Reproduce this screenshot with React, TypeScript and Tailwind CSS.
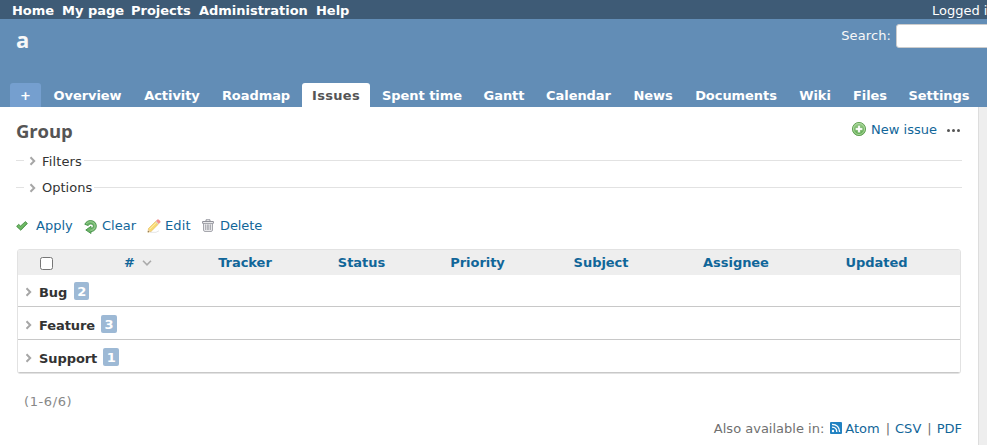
import React from "react";

const topLinks = [
  { name: "Home", width: "w-[50px]" },
  { name: "My page", width: "w-[69px]" },
  { name: "Projects", width: "w-[68px]" },
  { name: "Administration", width: "w-[117px]" },
  { name: "Help", width: "w-[40px]" },
];
const tabs = [
  { name: "Overview", width: "w-[89px]" },
  { name: "Activity", width: "w-[76px]" },
  { name: "Roadmap", width: "w-[88px]" },
  { name: "Issues", width: "w-[68px]" },
  { name: "Spent time", width: "w-[100px]" },
  { name: "Gantt", width: "w-[60px]" },
  { name: "Calendar", width: "w-[85px]" },
  { name: "News", width: "w-[60px]" },
  { name: "Documents", width: "w-[102px]" },
  { name: "Wiki", width: "w-[52px]" },
  { name: "Files", width: "w-[54px]" },
  { name: "Settings", width: "w-[80px]" },
];
const columns = [
  { name: "Tracker", width: "w-[116px]" },
  { name: "Status", width: "w-[117px]" },
  { name: "Priority", width: "w-[115px]" },
  { name: "Subject", width: "w-[132px]" },
  { name: "Assignee", width: "w-[138px]" },
  { name: "Updated", width: "w-[143px]" },
];
const groups = [
  { name: "Bug", count: 2 },
  { name: "Feature", count: 3 },
  { name: "Support", count: 1 },
];

function Chevron({ className = "" }: { className?: string }) {
  return (
    <svg className={className} width="8" height="10" viewBox="0 0 8 10" fill="none" stroke="#a6a6a6" strokeWidth="2">
      <path d="M1.5 1.2 5.2 5 1.5 8.8" />
    </svg>
  );
}

function AddIcon() {
  return (
    <svg width="16" height="16" viewBox="0 0 16 16" className="shrink-0">
      <defs>
        <linearGradient id="add" x1="0" y1="0" x2="0" y2="1">
          <stop offset="0" stopColor="#9bcf8b" />
          <stop offset="1" stopColor="#58a848" />
        </linearGradient>
      </defs>
      <circle cx="8" cy="8" r="6.6" fill="url(#add)" stroke="#5c9d4e" strokeWidth=".9" />
      <circle cx="8" cy="8" r="5.5" fill="none" stroke="#b5dba9" strokeWidth=".9" />
      <path d="M6.7 4.3h2.6v2.4h2.4v2.6H9.3v2.4H6.7V9.3H4.3V6.7h2.4z" fill="#fff" stroke="#68a95a" strokeWidth=".5" />
    </svg>
  );
}

function ApplyIcon() {
  return (
    <svg width="12" height="10" viewBox="0 0 12 10" className="shrink-0">
      <path d="M.6 5.4 2.6 3.3 4.6 5 9.4.6l2 1.9-6.6 6.8z" fill="#62b05a" stroke="#468d43" strokeWidth=".8" strokeLinejoin="round" />
      <path d="M2.2 4.8 4.6 6.8 9.7 1.9" fill="none" stroke="#83c779" strokeWidth=".8" />
    </svg>
  );
}

function ClearIcon() {
  return (
    <svg width="13" height="14" viewBox="0 0 13 14" className="shrink-0">
      <path d="M.8 4.3C2 1.6 4.4.5 6.8.6c3.3.1 5.5 2.4 5.5 5.5 0 3-2.1 5.3-5.3 5.5v1.9L1.8 10 7 6.3v2c1.5-.1 2.3-.9 2.3-2.1 0-1.3-1-2.2-2.5-2.2-1.2 0-2 .6-2.6 1.5z" fill="#6db568" stroke="#45914a" strokeWidth=".9" strokeLinejoin="round" />
      <path d="M2.3 4C3.6 2.2 5.1 1.7 6.8 1.8c2.6.1 4.3 1.9 4.3 4.3 0 2.3-1.7 4.1-4.6 4.3" fill="none" stroke="#a3d49d" strokeWidth=".9" />
    </svg>
  );
}

function EditIcon() {
  return (
    <svg width="14" height="14" viewBox="0 0 14 14" className="shrink-0">
      <path d="M3 13.3h6l3-1.5" stroke="#e5e5e5" fill="none" />
      <path d="M1.5 9.6 8.8 2.3l2.7 2.7-7.3 7.3-3.2.9z" fill="#f9da72" stroke="#e3b44e" strokeWidth=".6" />
      <path d="m2.7 10.1 7-7" stroke="#fff0b5" />
      <path d="m9 2.2 1.3-1.3q.7-.6 1.4 0l1.2 1.2q.6.7 0 1.4l-1.3 1.3z" fill="#f5918d" stroke="#eb7b78" strokeWidth=".5" />
      <path d="m8.4 2.8.7-.7 2.6 2.6-.7.7z" fill="#dedbd1" />
      <path d="m1.3 10.3-.5 3 3.1-.8z" fill="#edd0a5" />
      <path d="m.7 13.3.3-1.6 1.3 1.3z" fill="#6e6048" />
    </svg>
  );
}

function TrashIcon() {
  return (
    <svg width="12" height="13" viewBox="0 0 12 13" className="shrink-0" fill="none" stroke="#85868f" strokeWidth=".9">
      <path d="M4 2.2V.8h4v1.4M.6 2.5h10.8v1.8H.6zM1.7 4.7v6.6q0 1 .9 1h6.8q.9 0 .9-1V4.7" />
      <path d="M3.7 5.3v5.7M5.25 5.3v5.7M6.8 5.3v5.7M8.35 5.3v5.7" strokeWidth=".8" />
    </svg>
  );
}

function FeedIcon() {
  return (
    <svg width="12" height="12" viewBox="0 0 12 12" className="shrink-0">
      <rect width="12" height="12" rx="1" fill="#2182c2" />
      <path d="M2 2.4q7.4.2 7.6 7.6M2 5.2q4.7.1 4.8 4.8" fill="none" stroke="#fff" strokeWidth="1.3" />
      <circle cx="3" cy="9" r="1.2" fill="#fff" />
    </svg>
  );
}

function Fieldset({ label, className, labelClass }: { label: string; className: string; labelClass: string }) {
  return (
    <div className={`flex h-[17px] items-center ${className}`}>
      <span className="h-px w-2 bg-[#e2e2e2]" />
      <Chevron className="ml-[5px]" />
      <span className={`ml-[5px] text-[#333] ${labelClass}`}>{label}</span>
      <span className="h-px flex-1 bg-[#e2e2e2]" />
    </div>
  );
}

export default function App() {
  return (
    <div className="flex h-[445px] w-[987px] flex-col overflow-hidden bg-[#eee] text-[13px] leading-[17px] whitespace-nowrap text-[#333] [font-family:Verdana,'DejaVu_Sans',sans-serif]">
      <nav className="flex h-[19px] shrink-0 overflow-hidden bg-[#3e5b76] pt-[2px] pl-3 font-bold text-white">
        <div className="flex tracking-[-0.02px]">
          {topLinks.map((link) => <a key={link.name} className={link.width}>{link.name}</a>)}
        </div>
        <span className="-mr-20 ml-auto w-[135px] font-normal">Logged in as</span>
      </nav>

      <header className="flex h-[88px] shrink-0 flex-col justify-between bg-[#628db6] text-white">
        <div className="flex justify-between">
          <h1 className="pt-[8px] pl-4 text-[22px] leading-6 font-bold text-[#f8f8f8] [font-family:'Trebuchet_MS','Open_Sans',sans-serif]">a</h1>
          <div className="flex pt-[5px]">
            <label className="pt-[3px] tracking-[0.1px] text-[#f8f8f8]">Search:</label>
            <div className="-mr-2 ml-[5px] h-6 w-[99px] rounded-[3px] border border-[#ccc] bg-white" />
          </div>
        </div>
        <div className="flex h-6 gap-[2px] pl-[10px] font-bold tracking-[-0.06px]">
          <span className="w-[31px] shrink-0 rounded-t-[3px] bg-[#759fcf] pt-1 text-center">+</span>
          {tabs.map((tab) => (
            <a key={tab.name} className={`flex shrink-0 justify-center rounded-t-[3px] pt-1 ${tab.width} ${tab.name === "Issues" ? "bg-white tracking-[0.3px] text-[#555]" : ""}`}>{tab.name}</a>
          ))}
        </div>
      </header>

      <main className="flex w-[979px] flex-1 flex-col border-r border-[#ddd] bg-white pr-4 pl-4">
        <div className="flex h-[45px] items-start justify-between">
          <h2 className="pt-3 text-[18.5px] leading-6 font-bold tracking-[-0.1px] text-[#555] [font-family:'Trebuchet_MS','Open_Sans',sans-serif]">Group</h2>
          <div className="flex items-center pt-[14px] text-[#169]">
            <span className="-mt-px"><AddIcon /></span>
            <a className="ml-1">New issue</a>
            <span className="mr-[2px] ml-[10px] flex gap-[2px] pt-[2px]">
              {[0, 1, 2].map((dot) => <i key={dot} className="size-[3px] rounded-full bg-[#555]" />)}
            </span>
          </div>
        </div>

        <Fieldset label="Filters" className="" labelClass="w-[42px] pt-[2px] tracking-[0.15px]" />
        <Fieldset label="Options" className="mt-[10px]" labelClass="w-[52px]" />

        <div className="mt-[21px] flex h-[17px] items-center text-[#169]">
          <ApplyIcon /><a className="ml-2 w-12">Apply</a>
          <span className="mt-[2px]"><ClearIcon /></span><a className="ml-[5px] w-[45px]">Clear</a>
          <EditIcon /><a className="ml-1 w-[37px] tracking-[0.1px]">Edit</a>
          <span><TrashIcon /></span><a className="ml-[6px] tracking-[-0.1px]">Delete</a>
        </div>

        <section className="mt-[15px] ml-px h-[125px] w-[944px] shrink-0 overflow-hidden rounded-[3px] border border-[#e2e2e2]">
          <div className="flex h-[25px] items-center bg-[#eee] font-bold text-[#169]">
            <div className="w-[71px] pl-[22px]">
              <span className="mt-[2px] block size-[13px] rounded-[2.5px] border border-[#767676] bg-white" />
            </div>
            <div className="flex w-[98px] items-center justify-center gap-[7px]">
              <span>#</span>
              <svg width="10" height="6" viewBox="0 0 10 6" fill="none" stroke="#aaa" strokeWidth="1.6"><path d="m1 .8 4 4 4-4" /></svg>
            </div>
            {columns.map((column) => <span key={column.name} className={`text-center tracking-[-0.05px] ${column.width}`}>{column.name}</span>)}
          </div>
          {groups.map((group, index) => (
            <div key={group.name} className={`flex border-b border-[#c8c8c8] pl-[7px] font-bold ${index === 0 ? "h-[32px] pt-[7px]" : "h-[33px] pt-2"}`}>
              <Chevron className="mt-[5px]" />
              <span className="mt-[2px] ml-[6px] tracking-[-0.08px]">{group.name}</span>
              <span className={`h-[18px] rounded-[2px] bg-[#9db9d5] text-center leading-[19px] text-white ${index === 0 ? "ml-[7px] w-[15px]" : "ml-[6px] w-4"}`}>{group.count}</span>
            </div>
          ))}
        </section>

        <div className="mt-[19px] pl-2 tracking-[0.6px] text-[#888]">(1-6/6)</div>
        <div className="mt-[10px] flex items-center justify-end text-[#707070]">
          <span>Also available in:</span>
          <span className="-mt-px ml-[6px]"><FeedIcon /></span>
          <a className="ml-[3px] text-[#169]">Atom</a>
          <span className="mr-[5px] ml-[6px]">|</span>
          <a className="text-[#169]">CSV</a>
          <span className="mr-[5px] ml-[6px]">|</span>
          <a className="text-[#169]">PDF</a>
        </div>
      </main>
    </div>
  );
}
